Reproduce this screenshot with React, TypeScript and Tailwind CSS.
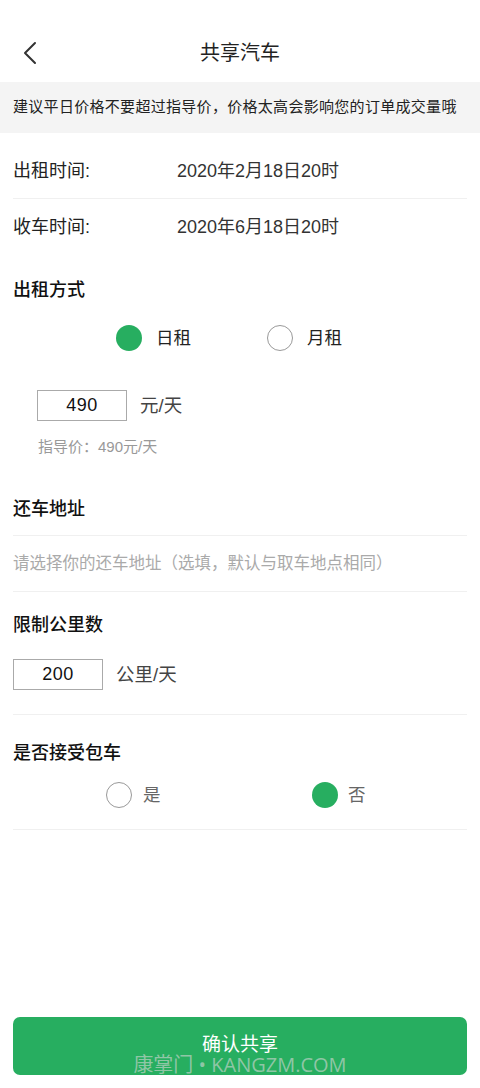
import React from "react";

const font = { fontFamily: '"Liberation Sans", "Noto Sans CJK SC", sans-serif' };

function Radio({ checked }: { checked: boolean }) {
  return checked ? (
    <span className="block w-[26px] h-[26px] rounded-full bg-[#27ae60]" />
  ) : (
    <span className="block w-[26px] h-[26px] rounded-full border border-[#999] bg-white" />
  );
}

export default function App() {
  return (
    <div style={font} className="w-[480px] h-[1088px] bg-white text-[#222] flex flex-col overflow-hidden">
      {/* header */}
      <div className="h-[82px] grid grid-cols-[60px_1fr_60px] items-center pt-[24px]">
        <div className="flex items-center pl-[22px]">
          <svg width="16" height="24" viewBox="0 0 16 24" fill="none">
            <path d="M13 2 L3 12 L13 22" stroke="#333" strokeWidth="2" strokeLinecap="round" strokeLinejoin="round" />
          </svg>
        </div>
        <div className="text-center text-[20px] text-[#222]">共享汽车</div>
        <div />
      </div>

      {/* banner */}
      <div className="h-[51px] bg-[#f4f4f4] flex items-center px-[13px] text-[15px] text-[#222] tracking-[0.3px] whitespace-nowrap">
        建议平日价格不要超过指导价，价格太高会影响您的订单成交量哦
      </div>

      {/* rows */}
      <div className="mx-[13px] h-[66px] pt-[11px] flex items-center border-b border-[#f0f0f0] text-[18px]">
        <span className="w-[164px] text-[#222]">出租时间:</span>
        <span className="text-[#333]">2020年2月18日20时</span>
      </div>
      <div className="mx-[13px] h-[56px] flex items-center text-[18px]">
        <span className="w-[164px] text-[#222]">收车时间:</span>
        <span className="text-[#333]">2020年6月18日20时</span>
      </div>

      {/* 出租方式 */}
      <div className="mx-[13px] mt-[15px] h-[40px] flex items-center text-[18px] font-medium text-[#111]">出租方式</div>
      <div className="h-[56px] flex items-center">
        <div className="flex items-center ml-[116px] w-[151px]">
          <Radio checked />
          <span className="ml-[14px] text-[17.5px] text-[#222]">日租</span>
        </div>
        <div className="flex items-center">
          <Radio checked={false} />
          <span className="ml-[14px] text-[17.5px] text-[#222]">月租</span>
        </div>
      </div>
      <div className="h-[31px] mt-[24px] flex items-center ml-[37px]">
        <div className="w-[90px] h-[31px] border border-[#aaa] flex items-center justify-center text-[18px] text-[#111] tracking-[0.5px]">490</div>
        <span className="ml-[13px] text-[18.5px] text-[#444]">元/天</span>
      </div>
      <div className="ml-[38px] mt-[15px] h-[22px] flex items-center text-[15px] text-[#999]">指导价：490元/天</div>

      {/* 还车地址 */}
      <div className="mx-[13px] mt-[25px] h-[53px] flex items-center border-b border-[#f0f0f0] text-[18px] font-medium text-[#111]">
        还车地址
      </div>
      <div className="mx-[13px] h-[56px] flex items-center border-b border-[#f0f0f0] text-[16.5px] text-[#aaa] whitespace-nowrap">
        请选择你的还车地址（选填，默认与取车地点相同）
      </div>

      {/* 限制公里数 */}
      <div className="mx-[13px] h-[67px] flex items-center text-[18px] font-medium text-[#111]">限制公里数</div>
      <div className="mx-[13px] h-[56px] flex items-start border-b border-[#f0f0f0]">
        <div className="w-[90px] h-[31px] border border-[#aaa] flex items-center justify-center text-[18px] text-[#111] tracking-[0.5px]">200</div>
        <span className="ml-[13px] h-[31px] flex items-center text-[18.5px] text-[#444]">公里/天</span>
      </div>

      {/* 是否接受包车 */}
      <div className="mx-[13px] h-[64px] pt-[12px] flex items-center text-[18px] font-medium text-[#111]">是否接受包车</div>
      <div className="mx-[13px] h-[51px] pt-[3px] flex items-start border-b border-[#f0f0f0]">
        <div className="flex items-center ml-[93px] w-[206px]">
          <Radio checked={false} />
          <span className="ml-[11px] text-[17.5px] text-[#666]">是</span>
        </div>
        <div className="flex items-center">
          <Radio checked />
          <span className="ml-[10px] text-[17.5px] text-[#666]">否</span>
        </div>
      </div>

      <div className="flex-1" />

      {/* button */}
      <div className="px-[13px] pb-[13px]">
        <div className="relative h-[58px] rounded-[7px] bg-[#27ae60] flex items-center justify-center pb-[2px]">
          <span className="text-[19px] text-white">确认共享</span>
          <span className="absolute left-0 right-0 bottom-[-3px] text-center text-[20px] leading-[26px] text-[rgba(215,215,215,0.6)] whitespace-nowrap" style={{ fontFamily: '"Open Sans", "Noto Sans CJK SC", sans-serif' }}>
            康掌门 • KANGZM.COM
          </span>
        </div>
      </div>
    </div>
  );
}
